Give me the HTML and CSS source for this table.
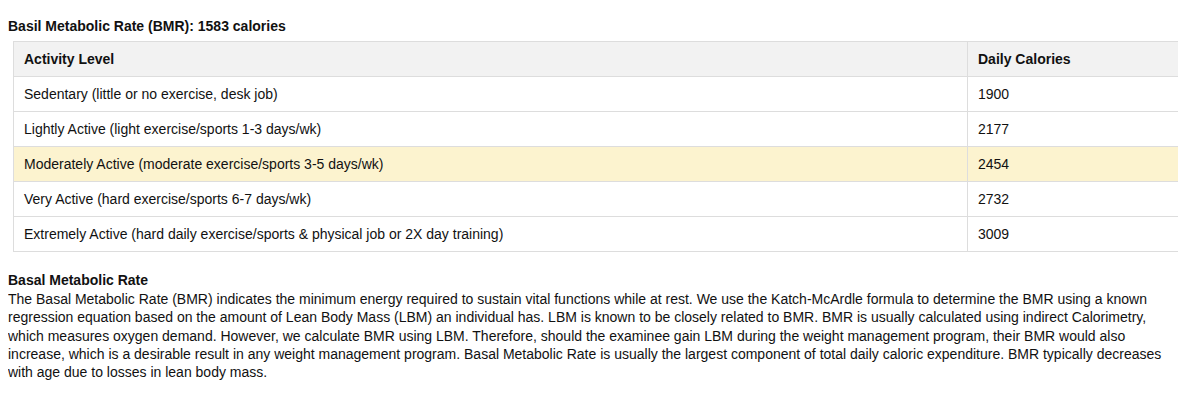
FILE: index.html
```html
<!DOCTYPE html>
<html>
<head>
<meta charset="utf-8">
<link rel="stylesheet" href="styles.css">
</head>
<body>
<div class="result-title">Basil Metabolic Rate (BMR): 1583 calories</div>
<table class="cal-table">
  <thead>
    <tr><th class="col-activity">Activity Level</th><th class="col-cal">Daily Calories</th></tr>
  </thead>
  <tbody>
    <tr><td>Sedentary (little or no exercise, desk job)</td><td>1900</td></tr>
    <tr><td>Lightly Active (light exercise/sports 1-3 days/wk)</td><td>2177</td></tr>
    <tr class="highlight"><td>Moderately Active (moderate exercise/sports 3-5 days/wk)</td><td>2454</td></tr>
    <tr><td>Very Active (hard exercise/sports 6-7 days/wk)</td><td>2732</td></tr>
    <tr><td>Extremely Active (hard daily exercise/sports &amp; physical job or 2X day training)</td><td>3009</td></tr>
  </tbody>
</table>
<div class="info">
  <div class="info-title">Basal Metabolic Rate</div>
  <p class="info-text">The Basal Metabolic Rate (BMR) indicates the minimum energy required to sustain vital functions while at rest. We use the Katch-McArdle formula to determine the BMR using a known regression equation based on the amount of Lean Body Mass (LBM) an individual has. LBM is known to be closely related to BMR. BMR is usually calculated using indirect Calorimetry, which measures oxygen demand. However, we calculate BMR using LBM. Therefore, should the examinee gain LBM during the weight management program, their BMR would also increase, which is a desirable result in any weight management program. Basal Metabolic Rate is usually the largest component of total daily caloric expenditure. BMR typically decreases with age due to losses in lean body mass.</p>
</div>
</body>
</html>
```
FILE: styles.css
```css
html, body {
  background: #ffffff;
}
body {
  margin: 8px;
  font-family: "Liberation Sans", Arial, Helvetica, sans-serif;
  font-size: 14px;
  line-height: 18px;
  color: #111111;
}
.result-title {
  font-weight: bold;
  padding-top: 9px;
}
.cal-table {
  margin: 6px 0 0 5px;
  width: 1165px;
  border-collapse: collapse;
  border-top: 1px solid #dddddd;
  border-left: 1px solid #dddddd;
}
.cal-table th,
.cal-table td {
  text-align: left;
  padding: 8px 10px;
  border-bottom: 1px solid #dddddd;
  vertical-align: middle;
}
.cal-table th {
  font-weight: bold;
  background: #f2f2f2;
}
.cal-table th + th,
.cal-table td + td {
  border-left: 1px solid #dddddd;
}
.col-activity {
  width: 933px;
}
.highlight td {
  background: #fcf3cf;
}
.info {
  margin-top: 19px;
}
.info-title {
  font-weight: bold;
}
.info-text {
  margin: 1px 0 0;
  line-height: 18.25px;
}
```
